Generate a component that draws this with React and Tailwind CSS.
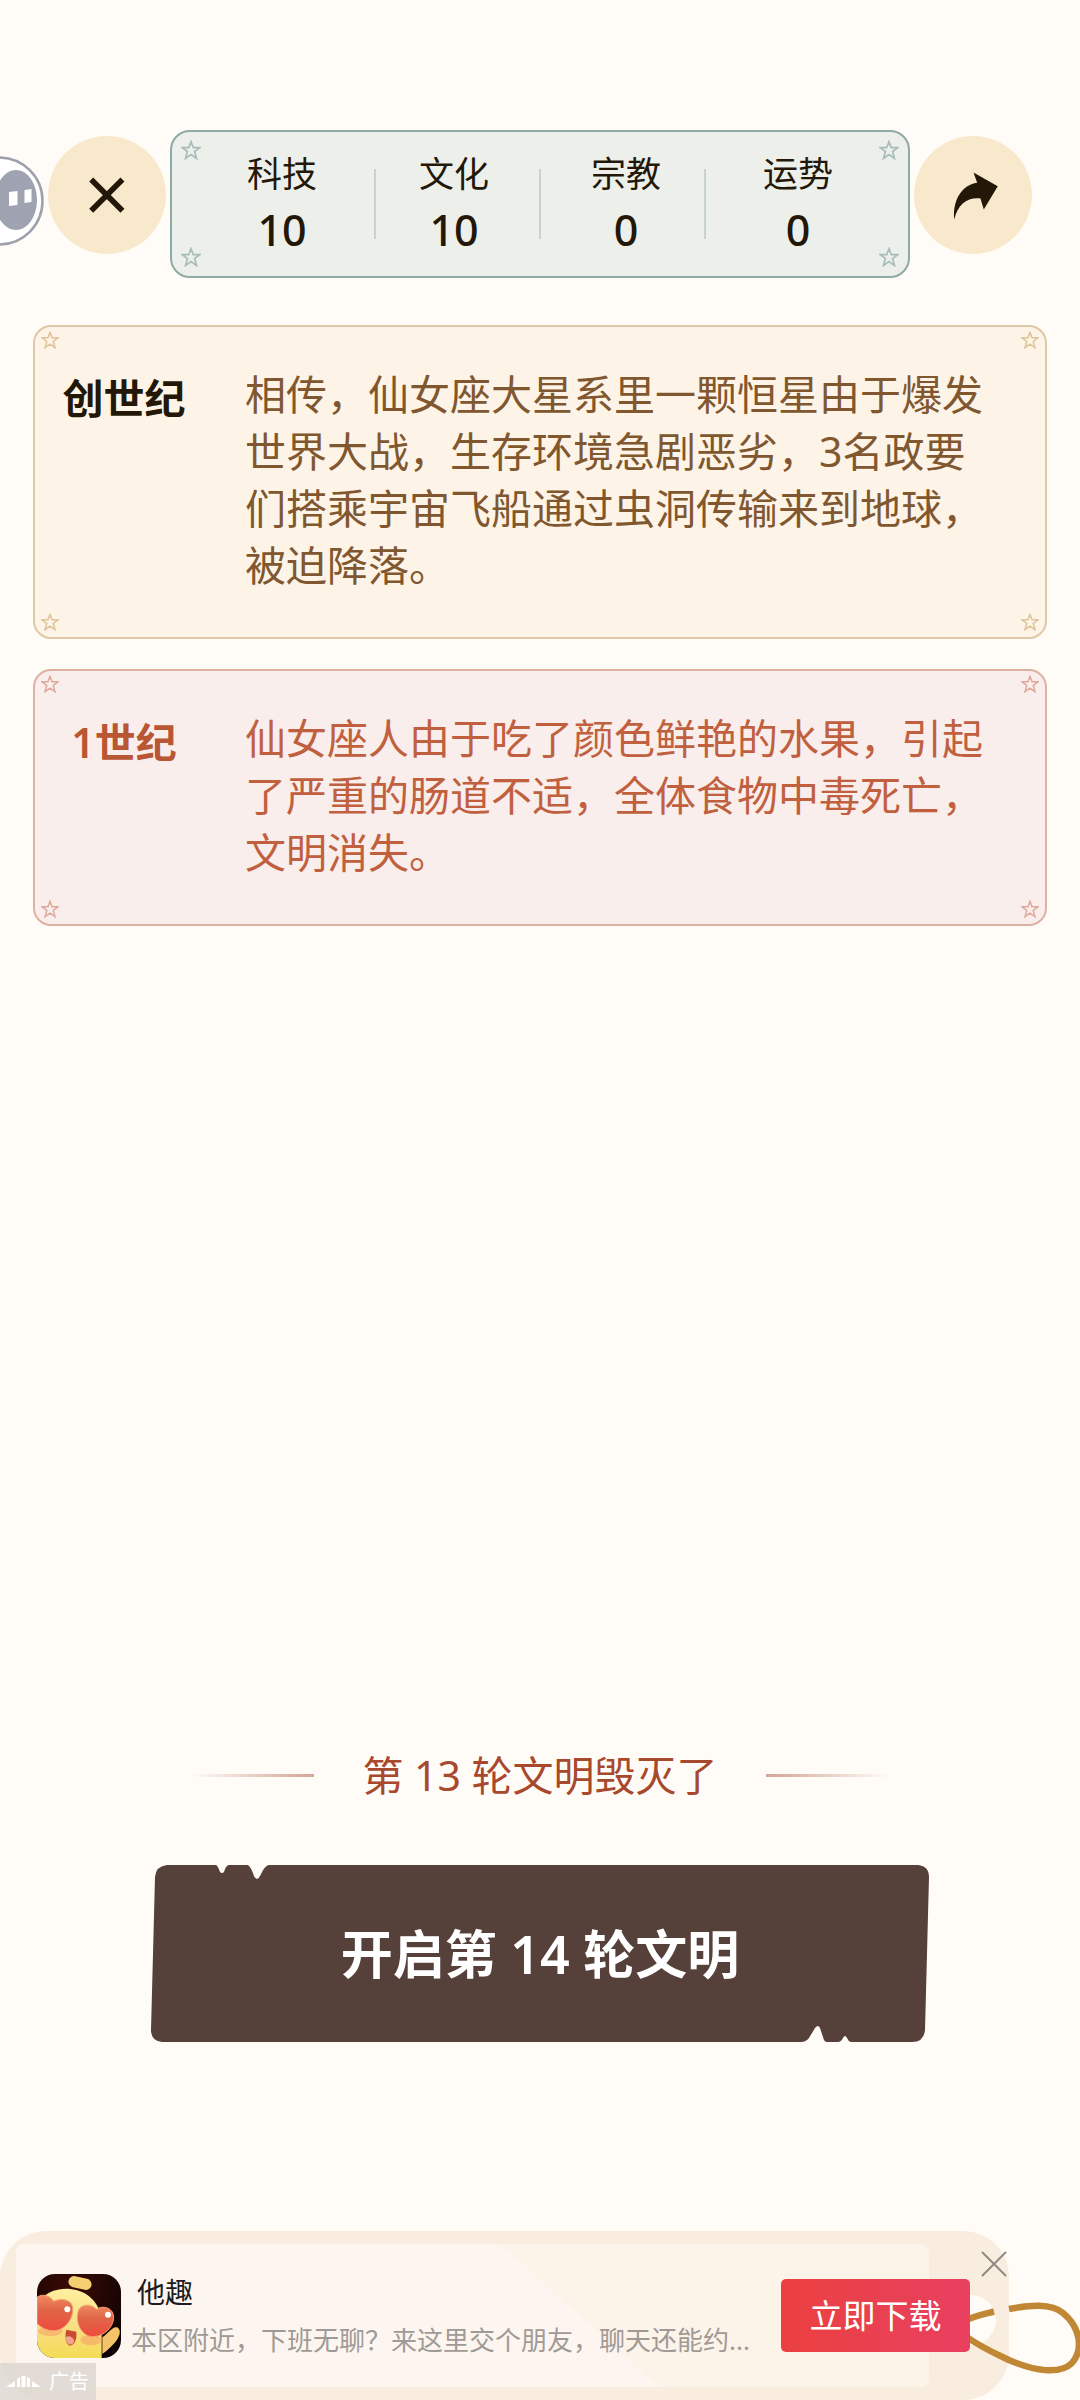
import clsx from 'clsx';

const STATS = [
  { label: '科技', value: 10 },
  { label: '文化', value: 10 },
  { label: '宗教', value: 0 },
  { label: '运势', value: 0 },
];

const EVENTS = [
  {
    era: '创世纪',
    text: '相传，仙女座大星系里一颗恒星由于爆发世界大战，生存环境急剧恶劣，3名政要们搭乘宇宙飞船通过虫洞传输来到地球，被迫降落。',
    card: 'bg-[#fdf4e7] border-[#dfc8a8]',
    star: 'text-[#dfc49a]',
    title: 'text-[#231808]',
    body: 'text-[#80572f]',
  },
  {
    era: '1世纪',
    text: '仙女座人由于吃了颜色鲜艳的水果，引起了严重的肠道不适，全体食物中毒死亡，文明消失。',
    card: 'bg-[#f9eeeb] border-[#dfb0a4]',
    star: 'text-[#dfa99c]',
    title: 'text-[#b95633]',
    body: 'text-[#c0603f]',
  },
];

function Star({ className }) {
  return (
    <svg viewBox="0 0 20 20" className={clsx('absolute', className)} fill="none" stroke="currentColor" strokeWidth="1.7">
      <path d="M10 1.600l2.300 6h6.500l-5.200 4 1.900 6.900L10 14.600l-5.500 3.900 1.900-6.900-5.200-4h6.500z" />
    </svg>
  );
}

function Mascot() {
  return (
    <svg viewBox="0 0 45 92" className="absolute left-0 top-[155px] w-[45px] h-[92px]">
      <circle cx="-1" cy="46" r="43.5" fill="#fff" stroke="#9da0ab" strokeWidth="2.5" />
      <ellipse cx="16" cy="45" rx="21" ry="30" fill="#9fa3b1" />
      <path d="M9 37l8.500-1v14l-8.500 1zM24.500 35l7-1v13l-7 1z" fill="#fff" />
    </svg>
  );
}

function RoundButton({ label, children }) {
  return (
    <button type="button" aria-label={label} className="mt-1.5 size-[118px] shrink-0 rounded-full bg-[#f8e9cd] text-[#231808]">
      <svg viewBox="0 0 355 355" className="size-full">{children}</svg>
    </button>
  );
}

function StatsPanel() {
  return (
    <div className="relative flex-1 flex h-[148px] px-6 pt-5 rounded-[20px] border-2 border-[#8faba6] bg-[#edefeb]">
      <Star className="size-5 left-[9px] top-2 text-[#a9bebb]" />
      <Star className="size-5 right-[9px] top-2 text-[#a9bebb]" />
      <Star className="size-5 left-[9px] bottom-[9px] text-[#a9bebb]" />
      <Star className="size-5 right-[9px] bottom-[9px] text-[#a9bebb]" />
      <div className="absolute inset-0 px-[202px] flex items-center justify-between" aria-hidden="true">
        <span className="w-0.5 h-[70px] bg-[#c5d2cd]" />
        <span className="w-0.5 h-[70px] bg-[#c5d2cd]" />
        <span className="w-0.5 h-[70px] bg-[#c5d2cd]" />
      </div>
      {STATS.map((s) => (
        <div key={s.label} className="flex-1 text-center text-[#231808]">
          <div className="text-[35px] leading-[44px]">{s.label}</div>
          <div className="mt-1.5 text-[43px] leading-[56px] font-medium">{s.value}</div>
        </div>
      ))}
    </div>
  );
}

function EventCard({ event }) {
  return (
    <article className={clsx('relative flex rounded-[18px] border-2 pt-[39px] pb-[43px]', event.card)}>
      <Star className={clsx('size-[18px] left-1.5 top-1', event.star)} />
      <Star className={clsx('size-[18px] right-1.5 top-1', event.star)} />
      <Star className={clsx('size-[18px] left-1.5 bottom-1.5', event.star)} />
      <Star className={clsx('size-[18px] right-1.5 bottom-1.5', event.star)} />
      <h2 className={clsx('w-[178px] shrink-0 pt-1 text-center text-[41px] leading-[57px] font-semibold', event.title)}>
        {event.era}
      </h2>
      <p className={clsx('flex-1 pl-8 pr-[54px] text-[41px] leading-[57px]', event.body)}>{event.text}</p>
    </article>
  );
}

function AppIcon() {
  return (
    <svg viewBox="0 0 252 252" className="size-[84px] shrink-0 rounded-[18px]">
      <defs>
        <linearGradient id="skin" x1="0" y1="0" x2="0" y2="1">
          <stop offset="0" stopColor="#fdf0a0" />
          <stop offset=".6" stopColor="#fadd80" />
          <stop offset="1" stopColor="#f3dc55" />
        </linearGradient>
        <linearGradient id="heart" x1="0" y1="0" x2="0" y2="1">
          <stop offset="0" stopColor="#f08a62" />
          <stop offset=".4" stopColor="#e06748" />
          <stop offset="1" stopColor="#ee4a3c" />
        </linearGradient>
        <radialGradient id="night" cx=".4" cy=".2" r=".8">
          <stop offset="0" stopColor="#3d0a05" />
          <stop offset="1" stopColor="#0c0302" />
        </radialGradient>
      </defs>
      <rect width="252" height="252" fill="url(#night)" />
      <rect x="94" y="10" width="70" height="34" rx="17" transform="rotate(12 129 27)" fill="#f3cf72" />
      <path d="M0 92C20 55 60 42 100 45c50 4 88 42 94 90v117H0z" fill="url(#skin)" />
      <path d="M196 240V190c16-10 30-34 44-30 20 10 4 46-44 80z" fill="#f6c468" />
      <ellipse cx="40" cy="172" rx="36" ry="14" fill="#f7a468" opacity=".6" />
      <ellipse cx="162" cy="198" rx="32" ry="16" fill="#f7a468" opacity=".6" />
      <path d="M0 70c16-12 38-6 50 12 22-10 50-6 56 14 8 34-22 74-56 74C28 170 10 160 0 148z" fill="url(#heart)" stroke="#f7a070" strokeWidth="3" />
      <path d="M178 106c-16-18-44-16-53 2-12 30 4 78 42 80 34 0 62-28 63-58 0-28-32-38-52-24z" fill="url(#heart)" stroke="#f7a070" strokeWidth="3" />
      <circle cx="91" cy="106" r="9" fill="#fff" />
      <circle cx="213" cy="122" r="9" fill="#fff" />
      <path d="M88 167l30 6c2 22-4 38-18 42-14-2-18-24-12-48z" fill="#c94a35" />
      <path d="M84 190c12-8 24 0 28 10-6 18-24 16-28-10z" fill="#f3a48c" />
    </svg>
  );
}

function AdBanner() {
  return (
    <aside className="relative h-[169px] w-full">
      <div className="mr-[71px] h-full rounded-[46px] bg-[#f8eddf] py-[13px] pl-4 pr-20">
        <div className="h-full rounded-lg bg-[linear-gradient(42deg,#fdf6f0_60%,#fcf3e9_60%)] pl-[21px] flex items-center gap-2.5">
          <AppIcon />
          <div className="min-w-0 whitespace-nowrap">
            <div className="pl-1.5 text-[28px] leading-9 text-[#1c1c22]">他趣</div>
            <div className="mt-3 text-[26px] leading-9 text-[#a09a96]">本区附近，下班无聊？来这里交个朋友，聊天还能约...</div>
          </div>
        </div>
      </div>
      {/* tag hole and the string looped through it */}
      <svg viewBox="0 0 130 169" className="absolute right-0 top-0 w-[130px] h-full" fill="none" stroke="#c08834" strokeWidth="6.5">
        <circle cx="21" cy="89" r="25" fill="#fffcf8" stroke="none" />
        <path d="M14 90C24 85 34 83 44 80.500" />
        <path d="M59 78C80 74 101 72 113 82C130 96 134 118 122 132C110 144 84 140 59 129C44 122 30 116 14 104" />
      </svg>
      <button type="button" className="absolute right-[110px] top-12 h-[73px] w-[189px] rounded-[5px] bg-linear-to-r from-[#eb4040] to-[#e8405f] text-[33px] leading-[44px] text-white">
        立即下载
      </button>
      <button type="button" aria-label="关闭广告" className="absolute right-[73px] top-5 size-[26px]">
        <svg viewBox="0 0 26 26" className="size-full" stroke="#918a82" strokeWidth="2" strokeLinecap="round">
          <path d="M1.500 1.500l23 23M24.500 1.500l-23 23" />
        </svg>
      </button>
      <div className="absolute left-0 bottom-0 flex h-[37px] w-24 items-center gap-2 bg-[#dcd6cf]/80 pl-1.5 text-[20px] leading-6 text-white">
        <svg viewBox="0 0 35 14" className="w-[35px] h-[14px]" fill="#fff">
          <path d="M0 12l9-6v6zM35 12l-9-6v6zM11 4l3-2v10h-3zM15.500 1h4v11h-4zM21 2l3 2v8h-3z" />
        </svg>
        广告
      </div>
    </aside>
  );
}

export default function App() {
  return (
    <div
      lang="zh-CN"
      className="relative flex min-h-screen flex-col overflow-hidden bg-[#fffcf8] font-['Noto_Sans','Noto_Sans_CJK_SC',sans-serif]"
    >
      <Mascot />
      <header className="flex items-start gap-1 px-12 pt-[130px]">
        <RoundButton label="关闭">
          <path d="M130 131l94 94M224 131l-94 94" stroke="currentColor" strokeWidth="17" />
        </RoundButton>
        <StatsPanel />
        <RoundButton label="分享">
          <path d="M121 251C116 196 142 148 190 141L179 110L252 151L210 221L200 188C160 184 132 206 121 251z" fill="currentColor" />
        </RoundButton>
      </header>

      <main className="mt-[47px] flex flex-col gap-[30px] px-[33px]">
        {EVENTS.map((e) => (
          <EventCard key={e.era} event={e} />
        ))}
      </main>

      <footer className="mt-auto">
        <div className="flex items-center justify-center gap-12">
          <span className="h-[3px] w-[124px] bg-linear-to-r from-transparent to-[#d3a496]" />
          <p className="text-[41px] leading-[56px] text-[#a8482c]">第 13 轮文明毁灭了</p>
          <span className="h-[3px] w-[124px] bg-linear-to-r from-[#d3a496] to-transparent" />
        </div>
        <div className="mt-[62px] mb-[189px] px-[150px]">
          <button type="button" className="relative block h-[177px] w-full text-[52px] leading-[72px] font-semibold text-white">
            <svg viewBox="0 0 780 177" preserveAspectRatio="none" className="absolute inset-0 size-full" fill="#56403a">
              <path d="M17 0H66Q68 1 70 7Q72 9 74 7Q76 0 79 0H98Q101 2 104 11Q107 17 110 11Q115 0 119 0H768Q779 1 779 12L775 165Q774 177 762 177H701Q698 176 697 173Q695 169 693 173Q691 177 688 177H677Q674 177 673 172L670 163Q668 159 665 163L659 173Q656 177 651 177H12Q1 176 1 165L5 12Q6 1 17 0z" />
            </svg>
            <span className="relative">开启第 14 轮文明</span>
          </button>
        </div>
        <AdBanner />
      </footer>
    </div>
  );
}
